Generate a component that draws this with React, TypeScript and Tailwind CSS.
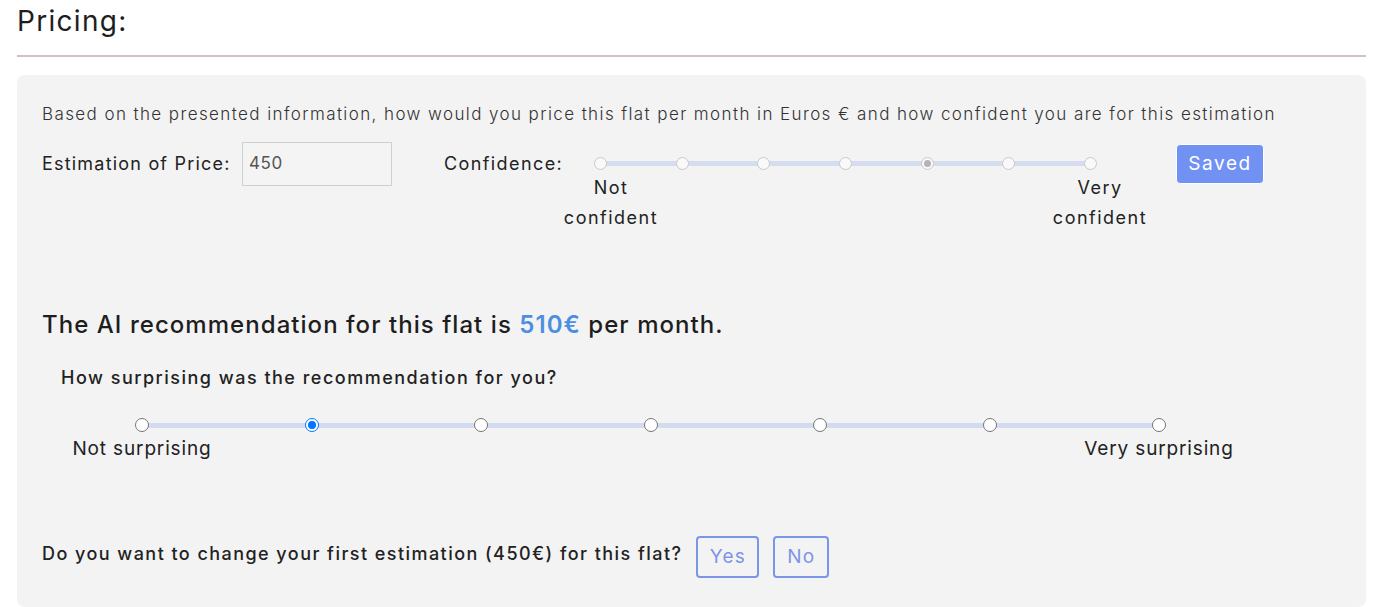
import React from "react";

const font = { fontFamily: "Inter, 'Open Sans', sans-serif" };

function ConfidenceDot({ selected }: { selected?: boolean }) {
  return (
    <span className="relative z-10 flex h-[13px] w-[13px] items-center justify-center rounded-full border border-[#c9c9c9] bg-[#f9f9f9]">
      {selected && <span className="h-[7px] w-[7px] rounded-full bg-[#b4b4b4]" />}
    </span>
  );
}

function SurpriseDot({ selected }: { selected?: boolean }) {
  if (selected)
    return (
      <span className="relative z-10 flex h-[14px] w-[14px] items-center justify-center rounded-full border-[1.5px] border-[#0075ff] bg-white">
        <span className="h-[8px] w-[8px] rounded-full bg-[#0075ff]" />
      </span>
    );
  return (
    <span className="relative z-10 h-[14px] w-[14px] rounded-full border border-[#767676] bg-white" />
  );
}

function App() {
  const conf = [0, 1, 2, 3, 4, 5, 6];
  const surprise = [0, 1, 2, 3, 4, 5, 6];

  return (
    <div className="min-h-[607px] bg-white pr-[8px] pl-[17px] text-[#222]" style={font}>
      <h1 className="pt-[2px] text-[28px] leading-[38px] font-normal tracking-[1.3px] text-[#1e1e1e]">Pricing:</h1>
      <hr className="mt-[15px] border-t-2 border-[#cdc3c6]" />

      <div className="mt-[18px] rounded-[8px] bg-[#f3f3f3] px-[25px] pt-[26px] pb-[29px]">
        <p className="text-[17px] leading-[26px] font-light tracking-[1.4px] text-[#333]">
          Based on the presented information, how would you price this flat per month in Euros € and how confident you are for this estimation
        </p>

        <div className="mt-[15px] flex items-start">
          <label className="w-[200px] text-[18px] leading-[44px] tracking-[1.2px] text-[#222]">Estimation of Price:</label>
          <div className="flex h-[44px] w-[150px] items-center border border-[#cfcfcf] bg-[#f4f4f4] px-[6px] text-[17px] tracking-[0.6px] text-[#555]">
            450
          </div>
          <span className="ml-[52px] w-[117px] text-[18px] leading-[44px] tracking-[1.4px] text-[#222]">Confidence:</span>

          <div className="mt-[12px] w-[589px]">
            <div className="relative flex h-[19px] items-center justify-between pr-[53px] pl-[33px]">
              <span className="absolute top-[7px] right-[60px] left-[40px] h-[5px] bg-[#d6ddf0]" />
              {conf.map((i) => (
                <ConfidenceDot key={i} selected={i === 4} />
              ))}
            </div>
            <div className="flex justify-between text-[18px] leading-[30px] tracking-[1.5px] text-[#222]">
              <span className="w-[100px] text-center">
                Not
                <br />
                confident
              </span>
              <span className="w-[100px] text-center">
                Very
                <br />
                confident
              </span>
            </div>
          </div>

          <button className="mt-[2px] ml-[26px] h-[40px] w-[88px] rounded-[4px] border border-white bg-[#7191f3] text-[19px] tracking-[1.6px] text-white">
            Saved
          </button>
        </div>

        <h2 className="mt-[76px] text-[24px] leading-[32px] font-medium tracking-[1.05px] text-[#1e1e1e]">
          The AI recommendation for this flat is <span className="font-semibold text-[#4b8fe2]">510€</span> per month.
        </h2>

        <div className="pl-[19px]">
          <p className="mt-[24px] text-[18px] leading-[26px] font-medium tracking-[1.5px] text-[#222]">
            How surprising was the recommendation for you?
          </p>
          <div className="mt-[27px] ml-[1px] w-[1177px]">
            <div className="relative flex h-[14px] items-center justify-between px-[73px]">
              <span className="absolute top-[5px] right-[80px] left-[80px] h-[5px] bg-[#d3dbf0]" />
              {surprise.map((i) => (
                <SurpriseDot key={i} selected={i === 1} />
              ))}
            </div>
            <div className="mt-[2px] flex justify-between text-[19px] leading-[30px] tracking-[0.85px] text-[#222]">
              <span className="w-[160px] text-center">Not surprising</span>
              <span className="w-[160px] text-center">Very surprising</span>
            </div>
          </div>
        </div>

        <div className="mt-[71px] flex items-start">
          <span className="mt-[6px] text-[18px] leading-[26px] font-medium tracking-[1.45px] text-[#222]">
            Do you want to change your first estimation (450€) for this flat?
          </span>
          <button className="mt-[1px] ml-[14px] h-[42px] w-[63px] rounded-[4px] border-2 border-[#7b96e8] text-[19px] tracking-[1.3px] text-[#7b96e8]">
            Yes
          </button>
          <button className="mt-[1px] ml-[14px] h-[42px] w-[56px] rounded-[4px] border-2 border-[#7b96e8] text-[19px] tracking-[1.3px] text-[#7b96e8]">
            No
          </button>
        </div>
      </div>
    </div>
  );
}

export default App;
